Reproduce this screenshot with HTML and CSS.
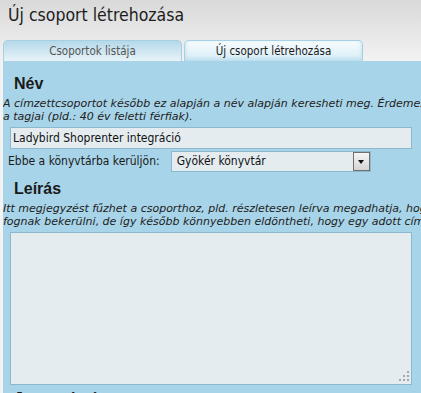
FILE: index.html
```html
<!DOCTYPE html>
<html lang="hu">
<head>
  <meta charset="UTF-8">
  <title>Új csoport létrehozása</title>
  <link rel="stylesheet" href="styles.css">
</head>
<body>

  <h1 class="page-title">Új csoport létrehozása</h1>

  <!-- fülek -->
  <div class="tabs">
    <div class="tab">Csoportok listája</div>
    <div class="tab tab-active">Új csoport létrehozása</div>
  </div>

  <div class="panel">
    <h2 class="section-title">Név</h2>
    <p class="hint">A címzettcsoportot később ez alapján a név alapján keresheti meg. Érdemes<br>a tagjai (pld.: 40 év feletti férfiak).</p>
    <input class="text-field" type="text" value="Ladybird Shoprenter integráció">

    <div class="field-row">
      <label class="field-label">Ebbe a könyvtárba kerüljön:</label>
      <div class="select-box">
        <span class="select-value">Gyökér könyvtár</span>
        <span class="select-btn"></span>
      </div>
    </div>

    <h2 class="section-title">Leírás</h2>
    <p class="hint">Itt megjegyzést fűzhet a csoporthoz, pld. részletesen leírva megadhatja, hogy<br>fognak bekerülni, de így később könnyebben eldöntheti, hogy egy adott cím</p>
    <div class="area-wrap">
      <textarea class="text-area"></textarea>
      <span class="grip"></span>
    </div>

    <h2 class="section-title">Jogosultság</h2>
  </div>

</body>
</html>
```

FILE: styles.css
```css
body {
  margin: 0;
  width: 421px;
  height: 393px;
  overflow: hidden;
  background: linear-gradient(#d9d9d9, #f3f3f3 62px);
  font-family: 'DejaVu Sans Condensed', 'DejaVu Sans', sans-serif;
  color: #222;
}

.page-title {
  margin: 0;
  padding: 5px 0 0 8px;
  height: 35px;
  font-size: 17.5px;
  font-weight: normal;
  color: #1d1d1d;
}

/* fülek */
.tabs {
  display: flex;
  gap: 2px;
  padding-left: 3px;
}

.tab {
  width: 177px;
  height: 20px;
  border: 1px solid #a6d0e2;
  border-bottom: none;
  border-radius: 5px 5px 0 0;
  background: linear-gradient(#b5d9ea, #e8f3f8);
  font-size: 11.5px;
  line-height: 20px;
  text-align: center;
  color: #555;
}

.tab-active {
  background: linear-gradient(#f8fcfe, #d6ecf6);
  box-shadow: inset 0 -2px 4px #b8dcec;
  color: #1a1a1a;
}

.panel {
  margin-left: 3px;
  padding-top: 12px;
  height: 320px;
  background: #a8d4e9;
  overflow: hidden;
}

.section-title {
  margin: 0 0 0 11px;
  font-family: 'Liberation Sans', Arial, sans-serif;
  font-size: 16px;
  font-weight: bold;
  line-height: 22px;
  color: #1a1a1a;
}

.hint {
  margin: 2px 0 4px 0;
  font-family: 'DejaVu Sans', sans-serif;
  font-size: 11px;
  font-style: italic;
  line-height: 13px;
  white-space: nowrap;
  color: #222;
}

.text-field {
  display: block;
  box-sizing: border-box;
  margin: 0 0 0 7px;
  width: 402px;
  height: 22px;
  padding: 0 2px;
  border: 1px solid #8cb8ce;
  background: #e4ecf0;
  font-family: 'DejaVu Sans Condensed', 'DejaVu Sans', sans-serif;
  font-size: 12px;
  color: #111;
}

.field-row {
  display: flex;
  align-items: center;
  gap: 11px;
  margin: 1px 0 6px 5px;
  height: 22px;
}

.field-label {
  font-size: 12px;
  color: #1a1a1a;
}

.select-box {
  display: flex;
  align-items: center;
  justify-content: space-between;
  box-sizing: border-box;
  width: 200px;
  height: 21px;
  border: 1px solid #8cb8ce;
  background: #e4ecf0;
  padding: 0 0 0 5px;
}

.select-value {
  font-size: 12px;
  color: #111;
}

.select-btn {
  position: relative;
  box-sizing: border-box;
  width: 17px;
  height: 19px;
  border: 1px solid #6f6f6f;
  background: linear-gradient(#f6f6f6, #d4d4d4);
}

.select-btn:before {
  content: "";
  position: absolute;
  left: 4px;
  top: 7px;
  border-left: 3.5px solid transparent;
  border-right: 3.5px solid transparent;
  border-top: 4px solid #111;
}

.area-wrap {
  position: relative;
  margin: 0 0 3px 7px;
  width: 402px;
  height: 153px;
}

.text-area {
  display: block;
  box-sizing: border-box;
  width: 402px;
  height: 153px;
  margin: 0;
  border: 1px solid #8cb8ce;
  background: #e4ecf0;
  resize: none;
}

.grip {
  position: absolute;
  right: 3px;
  bottom: 4px;
  width: 2px;
  height: 2px;
  background: #a8a8a8;
  box-shadow: 0 -4px #a8a8a8, -4px 0 #a8a8a8, -8px 0 #a8a8a8, -4px -4px #a8a8a8, 0 -8px #a8a8a8;
}
```
